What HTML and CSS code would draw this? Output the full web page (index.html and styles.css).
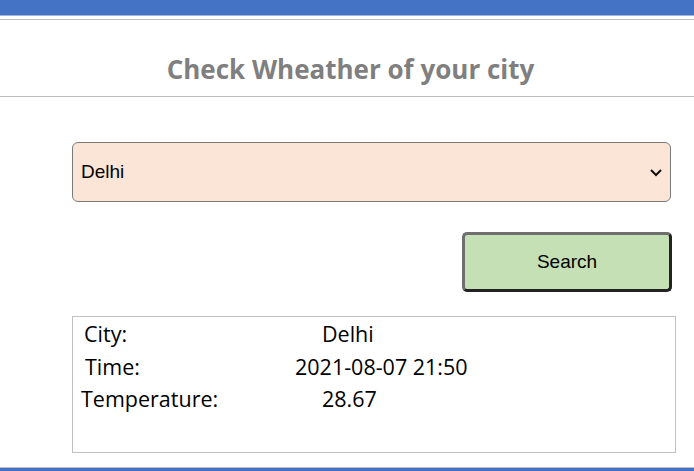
FILE: index.html
```html
<!DOCTYPE html>
<html>
<head>
<meta charset="utf-8">
<link rel="stylesheet" href="styles.css">
</head>
<body>
<div class="page">
  <div class="topbar"></div>
  <div class="topline"></div>
  <h1 class="title">Check Wheather of your city</h1>
  <div class="form">
    <div class="select">
      <span class="select-text">Delhi</span>
      <svg class="chev" width="14" height="9" viewBox="0 0 14 9"><path d="M2 2 L7 7 L12 2" fill="none" stroke="#111" stroke-width="2"/></svg>
    </div>
    <div class="btn-row">
      <button class="search">Search</button>
    </div>
    <div class="result">
      <div class="row"><span class="label l-city">City:</span><span class="value v-city">Delhi</span></div>
      <div class="row"><span class="label l-time">Time:</span><span class="value v-time">2021-08-07 21:50</span></div>
      <div class="row"><span class="label l-temp">Temperature:</span><span class="value v-temp">28.67</span></div>
    </div>
  </div>
  <div class="spacer"></div>
  <div class="bottombar"></div>
</div>
</body>
</html>
```
FILE: styles.css
```css
html, body { margin: 0; padding: 0; background: #fff; }
.page { width: 694px; height: 471px; display: flex; flex-direction: column; overflow: hidden; }
.topbar { height: 15px; background: #4472c4; border-bottom: 1px solid #9fb5dd; flex: none; }
.topline { height: 1px; background: #bdbdbd; margin-top: 3px; flex: none; }
.title {
  margin: 0; height: 77px; box-sizing: border-box; padding: 31px 0 0 7px;
  text-align: center; font-family: "Open Sans", sans-serif; font-weight: 700;
  font-size: 26px; line-height: 36px; color: #7f7f7f; letter-spacing: 0;
  border-bottom: 1px solid #bdbdbd; flex: none;
}
.form { padding: 45px 19px 0 72px; display: flex; flex-direction: column; flex: none; }
.select {
  height: 60px; box-sizing: border-box; width: 599px; margin-right: 4px;
  background: #fbe5d6; border: 1px solid #7a7a7a; border-radius: 6px;
  display: flex; align-items: center; justify-content: space-between; padding: 0 7px 0 8px;
  font-family: "Liberation Sans", Arial, sans-serif; font-size: 19px; color: #000;
}
.chev { display: block; }
.btn-row { display: flex; justify-content: flex-end; margin-top: 30px; padding-right: 3px; }
.search {
  width: 210px; height: 60px; box-sizing: border-box; background: #c5e0b4;
  border: 3px solid; border-color: #6f6f6f #222 #222 #6f6f6f; border-radius: 5px;
  font-family: "Liberation Sans", Arial, sans-serif; font-size: 19px; color: #000; padding: 0;
}
.result {
  margin-top: 24px; width: 604px; height: 137px; box-sizing: border-box;
  border: 1px solid #c0c0c0; padding-top: 1px;
  font-family: "Open Sans", "Noto Sans", sans-serif; font-size: 21.5px; color: #000;
}
.row { display: flex; height: 32.5px; line-height: 32px; }
.label { display: block; }
.l-city { margin-left: 11px; width: 238px; }
.l-time { margin-left: 12px; width: 210px; }
.l-temp { margin-left: 8px; width: 241px; }
.spacer { flex: 1; }
.bottombar { height: 3px; background: #4472c4; border-top: 1px solid #bdbdbd; flex: none; }
```
